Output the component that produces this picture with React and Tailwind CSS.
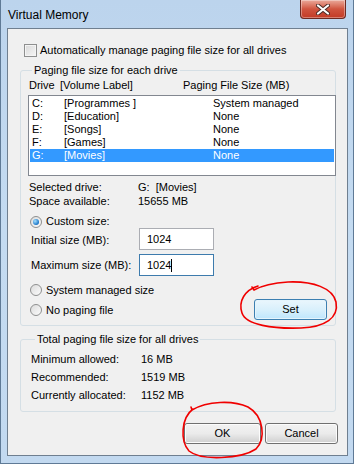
import React from 'react';

const drives = [
  { d: 'C:', label: '[Programmes ]', size: 'System managed' },
  { d: 'D:', label: '[Education]', size: 'None' },
  { d: 'E:', label: '[Songs]', size: 'None' },
  { d: 'F:', label: '[Games]', size: 'None' },
  { d: 'G:', label: '[Movies]', size: 'None', selected: true },
];

const totals = [
  ['Minimum allowed:', '16 MB'],
  ['Recommended:', '1519 MB'],
  ['Currently allocated:', '1152 MB'],
];

function Radio({ checked }) {
  return (
    <span className="w-[12px] h-[12px] rounded-full border border-[#8e8f8f] bg-gradient-to-br from-[#dcdcdc] to-[#fbfbfb] flex items-center justify-center shrink-0">
      {checked && (
        <span className="w-[6px] h-[6px] rounded-full bg-[radial-gradient(circle_at_35%_35%,#a4e0ff,#1a75c7_70%,#0a4d8c)]" />
      )}
    </span>
  );
}

function Button({ children, className = '', focused }) {
  return (
    <div
      className={`h-[21px] rounded-[3px] border flex items-center justify-center ${
        focused
          ? 'border-[#3c7fb1] bg-gradient-to-b from-[#eaf6fd] via-[#d9f0fc] to-[#bee6fd] shadow-[inset_0_0_0_1px_#e5f4fc]'
          : 'border-[#707070] bg-gradient-to-b from-[#f2f2f2] via-[#ebebeb] to-[#cfcfcf] shadow-[inset_0_0_0_1px_#fcfcfc]'
      } ${className}`}
    >
      {children}
    </div>
  );
}

export default function App() {
  return (
    <div className="relative w-[354px] h-[464px] overflow-hidden bg-gradient-to-b from-[#bcd4ed] via-[#c4dbf1] to-[#c2d9f0] border-l border-r border-b border-[#5f7a96] font-['Liberation_Sans',Arial,sans-serif] text-black text-[11px] leading-none whitespace-nowrap">
      {/* Title bar */}
      <div className="h-[28px] flex items-start">
        <div className="pl-[7px] pt-[9px] text-[12px]">Virtual Memory</div>
        <div className="ml-auto mr-[7px] w-[46px] h-[19px] rounded-b-[4px] border border-t-0 border-[#6d2a22] bg-gradient-to-b from-[#e9a99b] via-[#d0543f] to-[#c23a25] flex items-center justify-center shadow-[inset_0_0_0_1px_rgba(255,255,255,0.35)]">
          <svg width="14" height="11" viewBox="0 0 14 11">
            <path d="M2 1.5 L12 9.5 M12 1.5 L2 9.5" stroke="#4a2a25" strokeWidth="4" strokeLinecap="round" />
            <path d="M2 1.5 L12 9.5 M12 1.5 L2 9.5" stroke="#ffffff" strokeWidth="2.2" strokeLinecap="round" />
          </svg>
        </div>
      </div>

      {/* Client area */}
      <div className="ml-[6px] w-[341px] h-[428px] border border-[#6f7f90] bg-[#f0f0f0] flex flex-col">
        <div className="mt-[15px] ml-[16px] h-[13px] flex items-center gap-[3px]">
          <span className="w-[13px] h-[13px] border border-[#8e8f8f] bg-gradient-to-br from-[#d9d9d9] to-[#f6f6f6] shadow-[inset_0_0_0_1px_#f4f4f4]" />
          <span>Automatically manage paging file size for all drives</span>
        </div>

        {/* Paging file size for each drive */}
        <fieldset className="mt-[6px] ml-[12px] w-[316px] border border-[#d5dfe5] rounded-[3px] pl-[7px] pb-[5px]">
          <legend className="ml-[4px] px-[2px] h-[14px] leading-[14px]">Paging file size for each drive</legend>
          <div className="mt-[1px] h-[14px] flex items-center">
            <span className="w-[32px] pl-[1px]">Drive</span>
            <span className="w-[123px]">[Volume Label]</span>
            <span>Paging File Size (MB)</span>
          </div>
          <div className="mt-[3px] mr-[-1px] h-[81px] border border-[#828790] bg-white pt-[1px] px-[1px]">
            {drives.map((r) => (
              <div
                key={r.d}
                className={`h-[13px] flex items-center ${r.selected ? 'bg-[#3399ff] text-white' : ''}`}
              >
                <span className="w-[34px] pl-[2px]">{r.d}</span>
                <span className="w-[149px]">{r.label}</span>
                <span>{r.size}</span>
              </div>
            ))}
          </div>

          <div className="mt-[4px] h-[14px] flex items-center pl-[1px]">
            <span className="w-[109px]">Selected drive:</span>
            <span>G:&nbsp;&nbsp;[Movies]</span>
          </div>
          <div className="h-[14px] flex items-center pl-[1px]">
            <span className="w-[109px]">Space available:</span>
            <span>15655 MB</span>
          </div>

          <div className="mt-[7px] ml-[2px] h-[13px] flex items-center gap-[4px]">
            <Radio checked />
            <span>Custom size:</span>
          </div>
          <div className="h-[22px] flex items-center pl-[3px]">
            <span className="w-[108px] pt-[3px]">Initial size (MB):</span>
            <div className="w-[75px] h-[22px] border border-[#abadb3] bg-white flex items-center pl-[7px]">1024</div>
          </div>
          <div className="mt-[4px] h-[22px] flex items-center pl-[3px]">
            <span className="w-[108px]">Maximum size (MB):</span>
            <div className="w-[75px] h-[22px] border border-[#3d7bad] bg-white flex items-center pl-[7px]">
              1024<span className="w-px h-[13px] bg-black" />
            </div>
          </div>

          <div className="flex justify-between pr-[8px]">
            <div className="flex flex-col">
              <div className="mt-[7px] ml-[2px] h-[14px] flex items-center gap-[4px]">
                <Radio />
                <span>System managed size</span>
              </div>
              <div className="mt-[6px] ml-[2px] h-[14px] flex items-center gap-[4px]">
                <Radio />
                <span>No paging file</span>
              </div>
            </div>
            <Button focused className="mt-[23px] w-[73px]">Set</Button>
          </div>
        </fieldset>

        {/* Totals */}
        <fieldset className="mt-[6px] ml-[12px] w-[316px] border border-[#d5dfe5] rounded-[3px] pl-[10px] pb-[9px]">
          <legend className="ml-[4px] px-[2px] h-[14px] leading-[14px]">Total paging file size for all drives</legend>
          <div className="mt-[6px] flex flex-col gap-[4px]">
            {totals.map(([k, v]) => (
              <div key={k} className="h-[14px] flex items-center">
                <span className="w-[110px]">{k}</span>
                <span>{v}</span>
              </div>
            ))}
          </div>
        </fieldset>

        <div className="mt-[11px] pr-[9px] flex justify-end gap-[4px]">
          <Button className="w-[77px]">OK</Button>
          <Button className="w-[73px]">Cancel</Button>
        </div>
      </div>

      {/* Red hand-drawn annotations */}
      <svg className="absolute inset-0 pointer-events-none" width="354" height="464" viewBox="0 0 354 464">
        <path
          d="M257 286 C244 290 237 301 241 313 C245 325 272 329 300 328 C324 327 338 318 335 302 C332 288 312 281 287 282 C272 283 262 285 253 290 L251 287"
          fill="none"
          stroke="#f00000"
          strokeWidth="1.6"
          strokeLinecap="round"
        />
        <path
          d="M192 409 C180 418 179 441 188 451 C200 461 240 459 255 449 C265 439 263 416 247 407 C232 400 206 401 191 410 L190 407"
          fill="none"
          stroke="#f00000"
          strokeWidth="1.6"
          strokeLinecap="round"
        />
      </svg>
    </div>
  );
}
